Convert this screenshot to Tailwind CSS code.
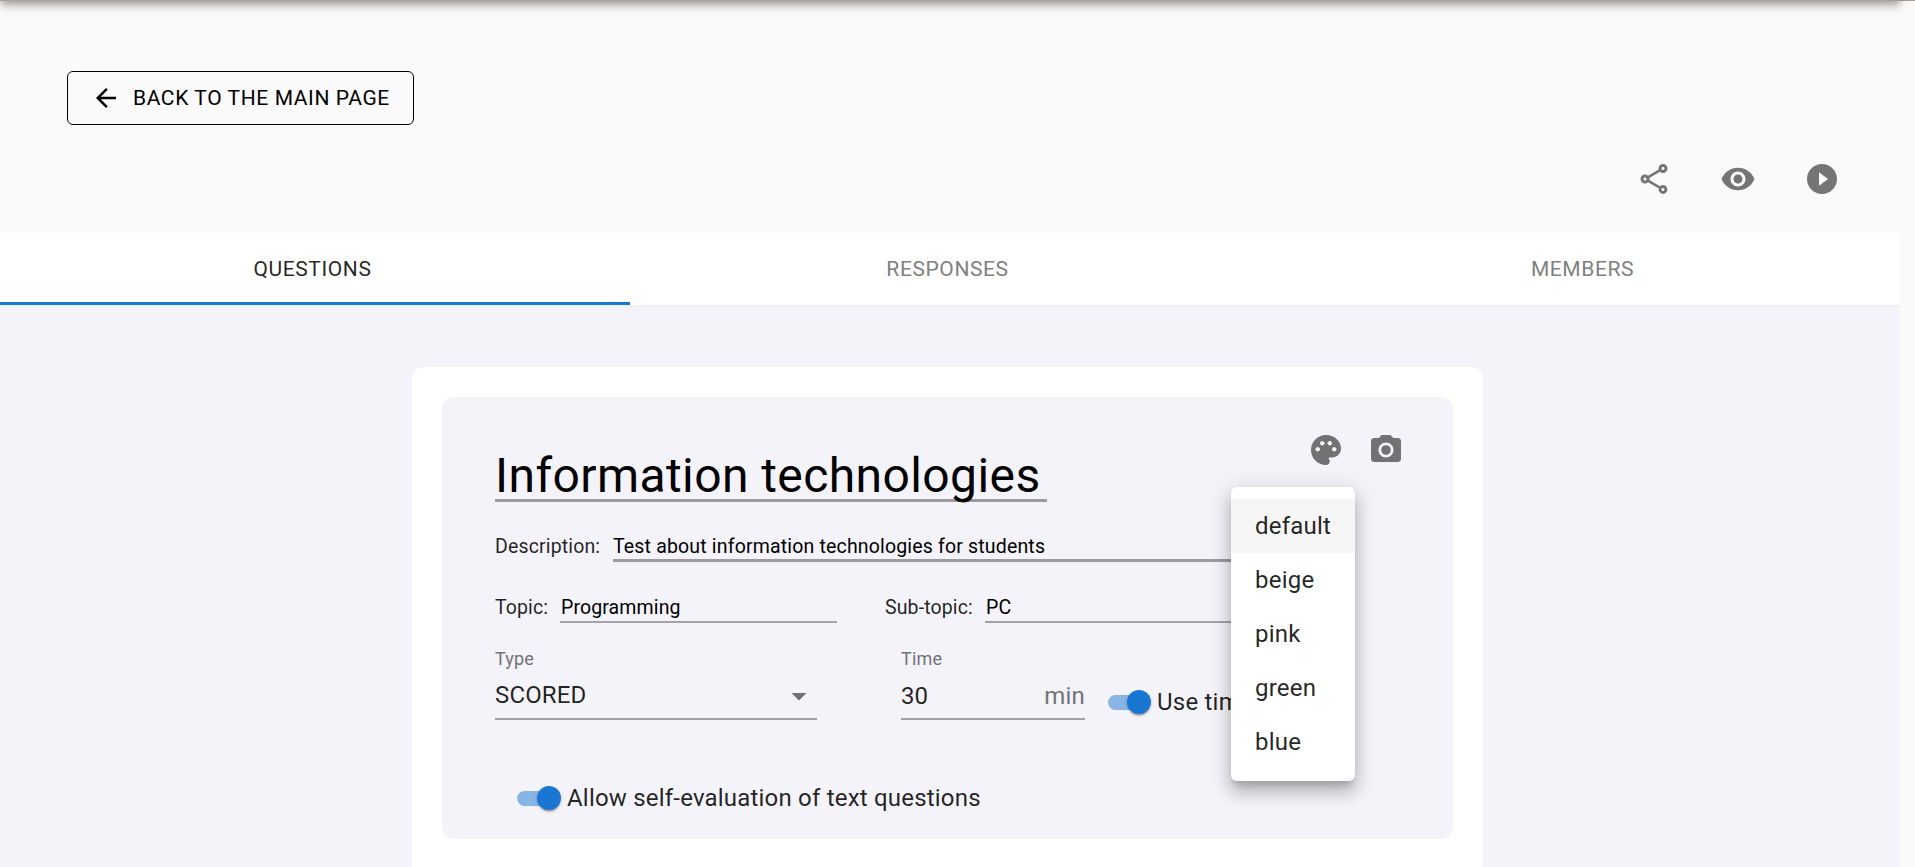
<!DOCTYPE html>
<html lang="en">
<head>
<meta charset="utf-8">
<title>Information technologies</title>
<script src="https://cdn.jsdelivr.net/npm/@tailwindcss/browser@4"></script>
</head>
<body class="h-[867px] overflow-hidden bg-[#fafafa] font-['Roboto',sans-serif] font-normal text-black/87">
<div class="relative h-[867px] w-[1915px] overflow-hidden">
  <header class="relative z-10 h-px w-[1915px] bg-[#b09c9a]">
    <!-- App bar scrolled out of view; only its shadow reaches the page -->
    <div class="absolute bottom-0 left-0 -z-10 h-24 w-[1900px] shadow-[0_3px_6px_-1.5px_rgba(0,0,0,0.2),0_6px_7.5px_0_rgba(0,0,0,0.14),0_1.5px_15px_0_rgba(0,0,0,0.12)]"></div>
  </header>

  <div class="flex w-[1900px] flex-col">
    <div class="h-[232px] pt-[70px]">
      <button class="ml-[67px] flex h-[54px] w-[347px] items-center rounded-[6px] border border-black pl-[23px] text-[21px] leading-[37px] tracking-[0.02857em] whitespace-nowrap text-black">
        <svg class="mr-3 size-[30px] shrink-0" viewBox="0 0 24 24" fill="currentColor"><path d="M20 11H7.83l5.59-5.59L12 4l-8 8 8 8 1.41-1.41L7.83 13H20v-2z"/></svg>
        BACK TO THE MAIN PAGE
      </button>
      <div class="mt-9 mr-[60px] flex justify-end gap-12 text-[#757575]">
        <svg class="size-9" viewBox="0 0 24 24" fill="currentColor"><path d="M18 16.08c-.76 0-1.44.3-1.96.77L8.91 12.7c.05-.23.09-.46.09-.7s-.04-.47-.09-.7l7.05-4.11c.54.5 1.25.81 2.04.81 1.66 0 3-1.34 3-3s-1.34-3-3-3-3 1.34-3 3c0 .24.04.47.09.7L8.04 9.81C7.5 9.31 6.79 9 6 9c-1.66 0-3 1.34-3 3s1.34 3 3 3c.79 0 1.5-.31 2.04-.81l7.12 4.16c-.05.21-.08.43-.08.65 0 1.61 1.31 2.92 2.92 2.92s2.92-1.31 2.92-2.92c0-1.61-1.31-2.92-2.92-2.92zM18 4c.55 0 1 .45 1 1s-.45 1-1 1-1-.45-1-1 .45-1 1-1zM6 13c-.55 0-1-.45-1-1s.45-1 1-1 1 .45 1 1-.45 1-1 1zm12 7.02c-.55 0-1-.45-1-1s.45-1 1-1 1 .45 1 1-.45 1-1 1z"/></svg>
        <svg class="size-9" viewBox="0 0 24 24" fill="currentColor"><path d="M12 4.5C7 4.5 2.73 7.61 1 12c1.73 4.39 6 7.5 11 7.5s9.27-3.11 11-7.5c-1.73-4.39-6-7.5-11-7.5zM12 17c-2.76 0-5-2.24-5-5s2.24-5 5-5 5 2.24 5 5-2.24 5-5 5zm0-8c-1.66 0-3 1.34-3 3s1.34 3 3 3 3-1.34 3-3-1.34-3-3-3z"/></svg>
        <svg class="size-9" viewBox="0 0 24 24" fill="currentColor"><path d="M12 2C6.48 2 2 6.48 2 12s4.48 10 10 10 10-4.48 10-10S17.52 2 12 2zm-2 14.5v-9l6 4.5-6 4.5z"/></svg>
      </div>
    </div>

    <nav class="flex h-[72px] justify-between bg-white text-[21px] tracking-[0.02857em]">
      <div class="flex w-[630px] items-center justify-center border-b-[3px] border-[#1976d2] pt-1 pr-[5px]">QUESTIONS</div>
      <div class="flex w-[630px] items-center justify-center pt-px pr-[5px] text-[#808080]">RESPONSES</div>
      <div class="flex w-[630px] items-center justify-center pt-px pr-[5px] text-[#808080]">MEMBERS</div>
    </nav>

    <main class="flex h-[562px] justify-center border-t-2 border-[#f0eff5] bg-[#f4f3f9] pr-[5px] pt-[60px]">
      <section class="h-[620px] w-[1071px] shrink-0 rounded-t-[12px] bg-white p-[30px]">
        <div class="flex h-[442px] flex-col rounded-[12px] bg-[#f4f3f9] pl-[53px]">
          <div class="flex h-[105px] items-start justify-between">
            <h1 class="mt-[49px] h-[56px] w-[552px] border-b-[3px] border-[#9c9ba0] text-[48px] leading-[60px] tracking-[0.41px] whitespace-nowrap text-black">Information technologies</h1>
            <div class="mt-[35px] mr-[49px] flex gap-6 text-[#727174]">
              <svg class="size-9" viewBox="0 0 24 24" fill="currentColor"><path d="M12 2C6.49 2 2 6.49 2 12s4.49 10 10 10c1.38 0 2.5-1.12 2.5-2.5 0-.61-.23-1.2-.64-1.67-.08-.1-.13-.21-.13-.33 0-.28.22-.5.5-.5H16c3.31 0 6-2.69 6-6 0-4.96-4.49-9-10-9zm5.5 11c-.83 0-1.5-.67-1.5-1.5s.67-1.5 1.5-1.5 1.5.67 1.5 1.5-.67 1.5-1.5 1.5zm-3-4c-.83 0-1.5-.67-1.5-1.5S13.67 6 14.5 6s1.5.67 1.5 1.5S15.33 9 14.5 9zM5 11.5c0-.83.67-1.5 1.5-1.5s1.5.67 1.5 1.5S7.33 13 6.5 13 5 12.33 5 11.5zm6-4c0 .83-.67 1.5-1.5 1.5S8 8.33 8 7.5 8.67 6 9.5 6s1.5.67 1.5 1.5z"/></svg>
              <svg class="size-9" viewBox="0 0 24 24" fill="currentColor"><circle cx="12" cy="12" r="3.2"/><path d="M9 2L7.17 4H4c-1.1 0-2 .9-2 2v12c0 1.1.9 2 2 2h16c1.1 0 2-.9 2-2V6c0-1.1-.9-2-2-2h-3.17L15 2H9zm3 15c-2.76 0-5-2.24-5-5s2.24-5 5-5 5 2.24 5 5-2.24 5-5 5z"/></svg>
            </div>
          </div>

          <div class="mt-[30px] flex h-[30px] text-[19.5px] leading-[30px] whitespace-nowrap">
            <span class="w-[118px] tracking-[0.15px]">Description:</span>
            <span class="h-[30px] w-[640px] border-b-[3px] border-[#9c9ba0] tracking-[0.17px] text-black">Test about information technologies for students</span>
          </div>

          <div class="mt-8 flex h-[29px] text-[19.5px] leading-[28px] tracking-[0.12px] whitespace-nowrap">
            <span class="w-[65px]">Topic:</span>
            <span class="w-[277px] border-b-2 border-[#a3a2a7] text-black"><span class="pl-px">Programming</span></span>
            <span class="ml-12 w-[100px]">Sub-topic:</span>
            <span class="w-[277px] border-b-2 border-[#a3a2a7] text-black"><span class="pl-px">PC</span></span>
          </div>

          <div class="mt-[25px] flex h-[72px] whitespace-nowrap">
            <div class="flex w-[322px] flex-col border-b-2 border-[#a3a2a7]">
              <span class="text-[18px] leading-[22px] tracking-[0.00938em] text-[#737277]">Type</span>
              <div class="flex flex-1 items-start justify-between">
                <span class="mt-[11px] text-[24px] leading-[28px] tracking-[0.15px]">SCORED</span>
                <svg class="mt-2 size-9" viewBox="0 0 24 24" fill="#727174"><path d="M7 10l5 5 5-5z"/></svg>
              </div>
            </div>
            <div class="ml-[84px] flex w-[184px] flex-col border-b-2 border-[#a3a2a7]">
              <span class="text-[18px] leading-[22px] tracking-[0.00938em] text-[#737277]">Time</span>
              <div class="mt-3 flex justify-between text-[24px] leading-[28px]">
                <span>30</span><span class="tracking-[0.00938em] text-[#737277]">min</span>
              </div>
            </div>
            <div class="mt-[42px] ml-[23px] flex h-6 items-center">
              <span class="flex h-[15px] w-[39px] items-center rounded-full bg-[#87b5e6] pl-[19px]"><span class="size-6 shrink-0 rounded-full bg-[#1976d2] shadow-[0_3px_1.5px_-1.5px_rgba(0,0,0,0.2),0_1.5px_1.5px_0_rgba(0,0,0,0.14),0_1.5px_4.5px_0_rgba(0,0,0,0.12)]"></span></span>
              <span class="ml-[10px] text-[24px] leading-[28px] tracking-[0.00938em]">Use timer</span>
            </div>
          </div>

          <div class="mt-[66px] ml-[22px] flex h-6 items-center whitespace-nowrap">
            <span class="flex h-[15px] w-[39px] items-center rounded-full bg-[#87b5e6] pl-5"><span class="size-6 shrink-0 rounded-full bg-[#1976d2] shadow-[0_3px_1.5px_-1.5px_rgba(0,0,0,0.2),0_1.5px_1.5px_0_rgba(0,0,0,0.14),0_1.5px_4.5px_0_rgba(0,0,0,0.12)]"></span></span>
            <span class="ml-[11px] text-[24px] leading-[28px] tracking-[0.2px]">Allow self-evaluation of text questions</span>
          </div>
        </div>
      </section>
    </main>
  </div>

  <ul class="absolute top-[487px] left-[1231px] z-20 w-[124px] rounded-[6px] bg-white py-3 text-[24px] leading-[54px] tracking-[0.00938em] shadow-[0_7.5px_7.5px_-4.5px_rgba(0,0,0,0.2),0_12px_15px_1.5px_rgba(0,0,0,0.14),0_4.5px_21px_3px_rgba(0,0,0,0.12)]">
    <li class="h-[54px] bg-[#f5f5f5] pl-6">default</li>
    <li class="h-[54px] pl-6">beige</li>
    <li class="h-[54px] pl-6">pink</li>
    <li class="h-[54px] pl-6">green</li>
    <li class="h-[54px] pl-6">blue</li>
  </ul>
</div>
</body>
</html>
